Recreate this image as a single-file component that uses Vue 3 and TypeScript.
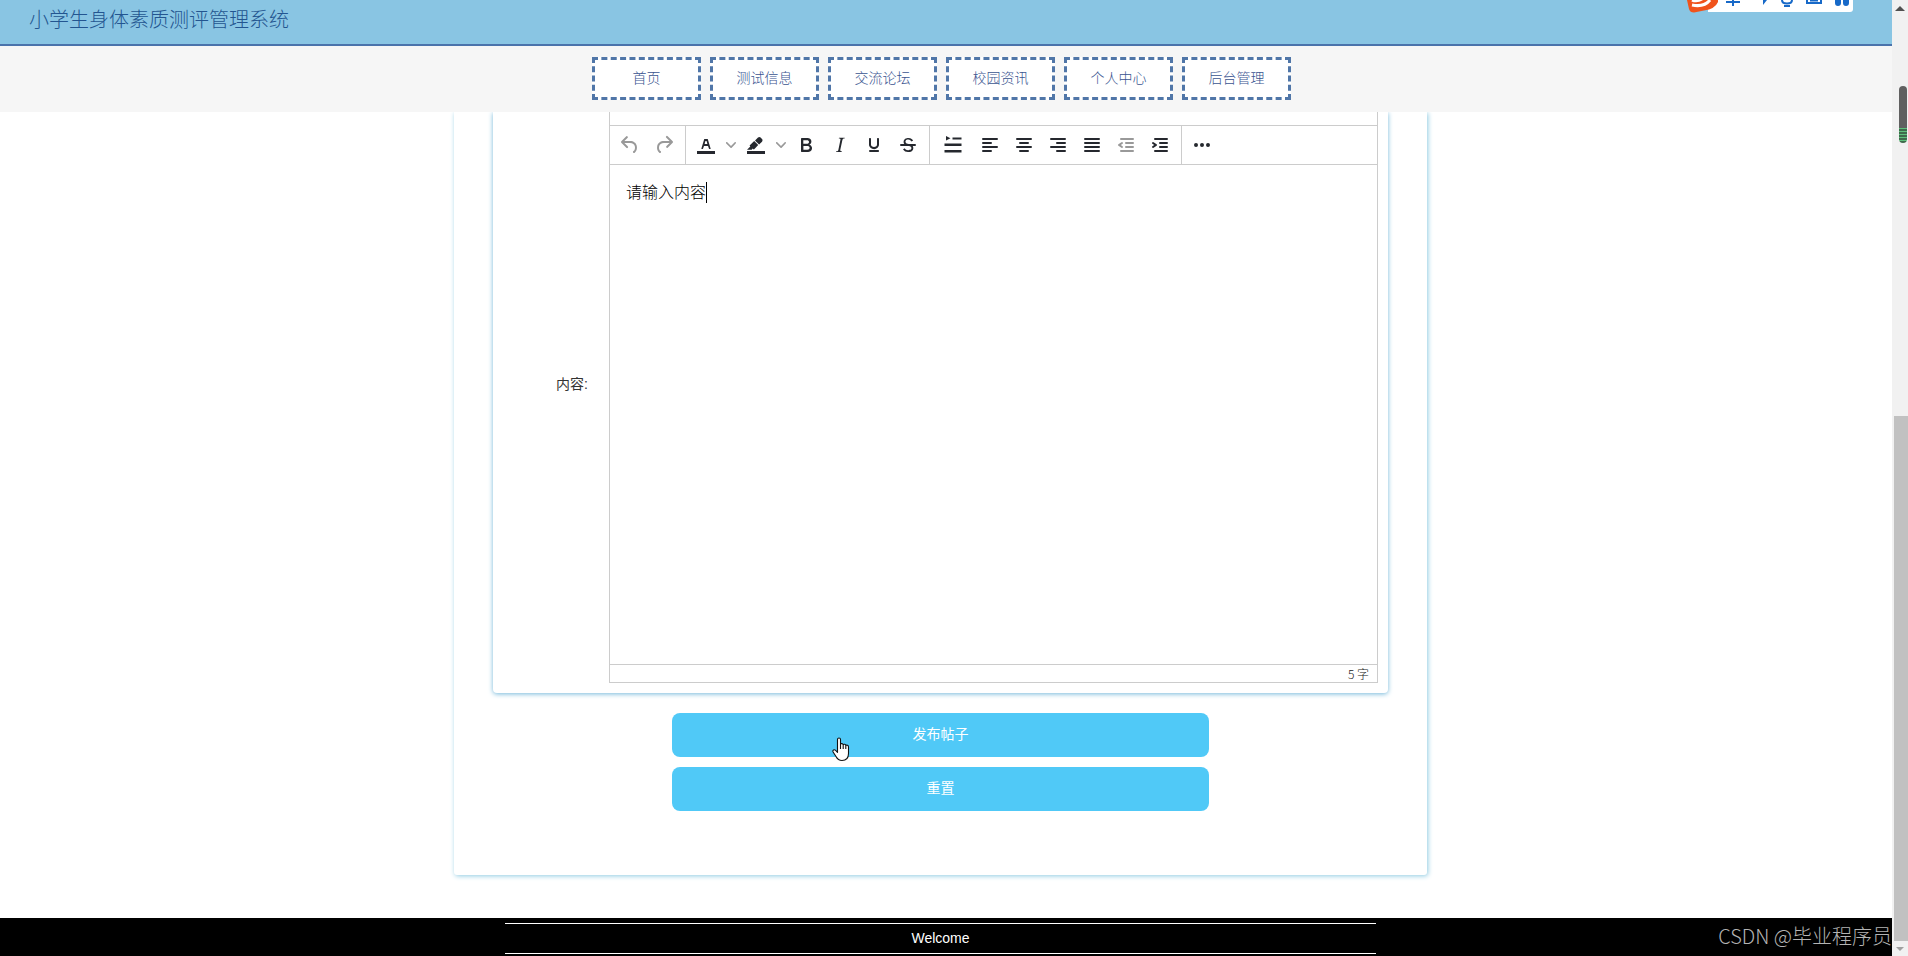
<script setup lang="ts">
import { ref } from 'vue'

interface Tool {
  name: string
  paths: string[]
  size?: string
  disabled?: boolean
  split?: boolean
}

const title = '小学生身体素质测评管理系统'
const menus: string[] = ['首页', '测试信息', '交流论坛', '校园资讯', '个人中心', '后台管理']
const defaultContent = '请输入内容'
const content = ref<string>(defaultContent)

function reset(): void {
  content.value = defaultContent
}

const bar = 'M3 18h18v3H3z'
const groups: Tool[][] = [
  [
    {
      name: '撤销',
      disabled: true,
      paths: ['M6.4 8H12c3.7 0 6.2 2 6.8 5.1.6 2.7-.4 5.6-2.3 6.8a1 1 0 01-1-1.8c1.1-.6 1.8-2.7 1.4-4.6-.5-2.1-2.1-3.5-4.9-3.5H6.4l3.3 3.3a1 1 0 11-1.4 1.4l-5-5a1 1 0 010-1.4l5-5a1 1 0 011.4 1.4L6.4 8z'],
    },
    {
      name: '重做',
      disabled: true,
      paths: ['M17.6 10H12c-2.8 0-4.4 1.4-4.9 3.5-.4 2 .3 4 1.4 4.6a1 1 0 11-1 1.8c-2-1.2-2.9-4.1-2.3-6.8.6-3 3-5.1 6.8-5.1h5.6l-3.3-3.3a1 1 0 111.4-1.4l5 5a1 1 0 010 1.4l-5 5a1 1 0 01-1.4-1.4l3.3-3.3z'],
    },
  ],
  [
    {
      name: '文字颜色',
      split: true,
      paths: [
        bar,
        'M8.7 16h-.8a.5.5 0 01-.5-.6l2.7-9c.1-.3.3-.4.5-.4h2.8c.2 0 .4.1.5.4l2.7 9a.5.5 0 01-.5.6h-.8a.5.5 0 01-.4-.4l-.7-2.2c0-.3-.3-.4-.5-.4h-3.4c-.2 0-.4.1-.5.4l-.7 2.2c0 .3-.2.4-.4.4zm2.6-7.6l-.6 2a.5.5 0 00.5.6h1.6a.5.5 0 00.5-.6l-.6-2c0-.3-.3-.4-.5-.4h-.4c-.2 0-.4.1-.5.4z',
      ],
    },
    {
      name: '背景颜色',
      split: true,
      paths: [
        bar,
        'M7.7 16.7H3l3.3-3.3-.7-.8L10.2 8l4 4.1-4 4.2c-.2.2-.6.2-.8 0l-.6-.7-1.1 1.1zm5-7.5L11 7.4l3-2.9a2 2 0 012.6 0L18 6c.7.7.7 2 0 2.7l-2.9 2.9-1.8-1.8-.5-.6z',
      ],
    },
    {
      name: '粗体',
      paths: ['M7.8 19c-.3 0-.5 0-.6-.2l-.2-.5V5.7c0-.2 0-.4.2-.5l.6-.2h5c1.5 0 2.7.3 3.5 1 .7.6 1.1 1.4 1.1 2.5a3 3 0 01-.6 1.9c-.4.6-1 1-1.6 1.2.4.1.9.3 1.3.6s.8.7 1 1.2c.4.4.5 1 .5 1.6 0 1.3-.4 2.3-1.3 3-.8.7-2.1 1-3.8 1H7.8zm5-8.3c.6 0 1.2-.1 1.6-.5.4-.3.6-.7.6-1.3 0-1.1-.8-1.7-2.3-1.7H9.3v3.5h3.4zm.5 6c.7 0 1.3-.1 1.7-.4.4-.4.6-.9.6-1.5s-.2-1-.7-1.4c-.4-.3-1-.4-2-.4H9.4v3.8h4z'],
    },
    {
      name: '斜体',
      paths: ['M16.7 4.7l-.1.9h-.3c-.6 0-1 0-1.4.3-.3.3-.4.6-.5 1.1l-2.1 9.8v.6c0 .5.4.8 1.4.8h.2l-.2.8H8l.2-.8h.2c1.1 0 1.8-.5 2-1.5l2-9.8.1-.5c0-.6-.4-.8-1.4-.8h-.3l.2-.9h5.8z'],
    },
    {
      name: '下划线',
      paths: ['M16 5c.6 0 1 .4 1 1v5.5a4 4 0 01-.4 1.8l-1 1.4a5.3 5.3 0 01-5.5 1 5 5 0 01-1.6-1c-.5-.4-.8-.9-1.1-1.4a4 4 0 01-.4-1.8V6c0-.6.4-1 1-1s1 .4 1 1v5.5c0 .3 0 .6.2 1l.6.7a3.3 3.3 0 002.2.8 3.4 3.4 0 002.2-.8c.3-.2.4-.5.6-.8l.2-.9V6c0-.6.4-1 1-1zM8 17h8c.6 0 1 .4 1 1s-.4 1-1 1H8a1 1 0 010-2z'],
    },
    {
      name: '删除线',
      paths: [
        'M15.6 8.5c-.5-.7-1-1.1-1.3-1.3-.6-.4-1.3-.6-2-.6-2.7 0-2.8 1.7-2.8 2.1 0 1.6 1.8 2 3.2 2.3 4.4.9 4.6 2.8 4.6 3.9 0 1.4-.7 4.1-5 4.1A6.2 6.2 0 017 16.4l1.5-1.1c.4.6 1.6 2 3.7 2 1.6 0 2.5-.4 3-1.2.4-.8.3-2-.8-2.6-.7-.4-1.6-.7-2.9-1-1-.2-3.9-.8-3.9-3.6C7.6 6 10.3 5 12.4 5c2.9 0 4.2 1.6 4.7 2.4l-1.5 1.1z',
        'M5 11h14a1 1 0 010 2H5a1 1 0 010-2z',
      ],
    },
  ],
  [
    {
      name: '首行缩进',
      size: 'wide',
      paths: ['M5 3l4.500 2.300L5 7.600zM11.500 4.500H20.500v2h-9zM3.500 10.500h17v2.500h-17zM3.500 17h17v2.500h-17z'],
    },
    {
      name: '左对齐',
      paths: ['M5 5h14a1 1 0 010 2H5a1 1 0 010-2zm0 4h8a1 1 0 010 2H5a1 1 0 010-2zm0 4h14a1 1 0 010 2H5a1 1 0 010-2zm0 4h8a1 1 0 010 2H5a1 1 0 010-2z'],
    },
    {
      name: '居中',
      paths: ['M5 5h14a1 1 0 010 2H5a1 1 0 010-2zm3 4h8a1 1 0 010 2H8a1 1 0 010-2zm-3 4h14a1 1 0 010 2H5a1 1 0 010-2zm3 4h8a1 1 0 010 2H8a1 1 0 010-2z'],
    },
    {
      name: '右对齐',
      paths: ['M5 5h14a1 1 0 010 2H5a1 1 0 010-2zm6 4h8a1 1 0 010 2h-8a1 1 0 010-2zm-6 4h14a1 1 0 010 2H5a1 1 0 010-2zm6 4h8a1 1 0 010 2h-8a1 1 0 010-2z'],
    },
    {
      name: '两端对齐',
      paths: ['M5 5h14a1 1 0 010 2H5a1 1 0 010-2zm0 4h14a1 1 0 010 2H5a1 1 0 010-2zm0 4h14a1 1 0 010 2H5a1 1 0 010-2zm0 4h14a1 1 0 010 2H5a1 1 0 010-2z'],
    },
    {
      name: '减少缩进',
      disabled: true,
      paths: ['M7 5h12a1 1 0 010 2H7a1 1 0 010-2zm5 4h7a1 1 0 010 2h-7a1 1 0 010-2zm0 4h7a1 1 0 010 2h-7a1 1 0 010-2zm-5 4h12a1 1 0 010 2H7a1 1 0 010-2zm1.600-3.800a1 1 0 01-1.200 1.600l-3-2a1 1 0 010-1.600l3-2a1 1 0 011.200 1.600L6.800 12l1.800 1.200z'],
    },
    {
      name: '增加缩进',
      paths: ['M7 5h12a1 1 0 010 2H7a1 1 0 010-2zm5 4h7a1 1 0 010 2h-7a1 1 0 010-2zm0 4h7a1 1 0 010 2h-7a1 1 0 010-2zm-5 4h12a1 1 0 010 2H7a1 1 0 010-2zm-2.600-3.800L6.200 12l-1.800-1.200a1 1 0 011.200-1.600l3 2a1 1 0 010 1.600l-3 2a1 1 0 01-1.200-1.600z'],
    },
  ],
  [
    {
      name: '更多',
      paths: ['M6 10a2 2 0 100 4 2 2 0 000-4zm6 0a2 2 0 100 4 2 2 0 000-4zm6 0a2 2 0 100 4 2 2 0 000-4z'],
    },
  ],
]
</script>

<template>
  <div class="window">
    <div class="page">
      <header class="header">
        <h1 class="title">{{ title }}</h1>
      </header>
      <nav class="nav">
        <a v-for="menu in menus" :key="menu" class="nav-item" href="#">{{ menu }}</a>
      </nav>

      <main class="main">
        <form class="card" @submit.prevent>
          <div class="panel">
            <label class="label" for="content">内容:</label>
            <div class="editor">
              <div class="menubar"></div>
              <div class="toolbar">
                <div v-for="(group, i) in groups" :key="i" class="group">
                  <template v-for="tool in group" :key="tool.name">
                    <button type="button" class="tool" :class="tool.size" :disabled="tool.disabled" :aria-label="tool.name">
                      <svg width="24" height="24" viewBox="0 0 24 24">
                        <path v-for="d in tool.paths" :key="d" :d="d" fill-rule="evenodd" />
                      </svg>
                    </button>
                    <button v-if="tool.split" type="button" class="tool chevron" :aria-label="tool.name + '选项'">
                      <svg width="10" height="10" viewBox="0 0 10 10">
                        <path d="M8.7 2.2c.3-.3.8-.3 1 0 .4.4.4.9 0 1.2L5.7 7.8c-.3.3-.9.3-1.2 0L.2 3.4a.8.8 0 010-1.2c.3-.3.8-.3 1.1 0L5 6l3.700-3.800z" />
                      </svg>
                    </button>
                  </template>
                </div>
              </div>
              <div class="body">
                <textarea id="content" v-model="content" class="text" spellcheck="false"></textarea>
                <span class="caret"></span>
              </div>
              <div class="status">{{ content.length }} 字</div>
            </div>
          </div>
          <div class="actions">
            <button type="submit" class="action">
              发布帖子
              <svg class="pointer" width="18" height="26" viewBox="0 0 18 26">
                <path d="M5.500 14V2.600c0-2.100 3-2.100 3 0V7c.5-.7 2.300-.5 2.700.6.800-.7 2.300-.3 2.600.8 1-.6 2.700 0 2.700 1.500v6.600c0 4-2.300 7-6.500 7-3.300 0-4.700-1.500-6-4L1.100 15c-.9-1.800 1.200-3 2.500-1.600L5.500 15.300zM8.500 7v5M11.200 7.600V12M13.800 8.400V12" fill="#fff" stroke="#111" stroke-width="1.100" stroke-linejoin="round" />
              </svg>
            </button>
            <button type="button" class="action" @click="reset">重置</button>
          </div>
        </form>
      </main>

      <footer class="footer">
        <div class="welcome">Welcome</div>
        <span class="watermark">CSDN @毕业程序员</span>
      </footer>

      <div class="ime">
        <svg width="170" height="14" viewBox="0 0 170 14">
          <path d="M22 0H167V9a3 3 0 01-3 3H22z" fill="#fff" />
          <path d="M1 0H32V2Q29 9 18 10.500L8 12.500Q4 12.500 3 9z" fill="#f0531c" />
          <path d="M6 5Q18 7.500 24 0M6 0Q11 2 16 -1" fill="none" stroke="#fff" stroke-width="3" />
          <g fill="none" stroke="#1769c8" stroke-width="2">
            <path d="M40 2H54M47 0V6" />
            <path d="M96 0Q96 3.500 101 3.500Q106 3.500 106 0M98 6H104" />
            <path d="M121 0V3H135V0M124 .5H132" />
          </g>
          <path d="M77 0H81L77 5zM149 0h6v3a3 3 0 01-6 0zM157 0h6v3a3 3 0 01-6 0z" fill="#1769c8" />
        </svg>
      </div>
    </div>

    <div class="scrollbar">
      <svg class="arrow" width="10" height="5" viewBox="0 0 10 5"><path d="M0 5L5 0l5 5z" fill="#505050" /></svg>
      <div class="thumb"></div>
      <svg class="arrow" width="8" height="4" viewBox="0 0 8 4"><path d="M0 0h8L4 4z" fill="#a0a0a0" /></svg>
      <div class="gauge"></div>
    </div>
  </div>
</template>

<style>
body {
  margin: 0;
}
</style>

<style scoped>
.window {
  display: flex;
  min-height: 100vh;
  background: #fff;
  color: #333;
  font: 300 14px/20px "Liberation Sans", "Noto Sans CJK SC", sans-serif;
}
.window * {
  box-sizing: border-box;
}
.page {
  position: relative;
  display: flex;
  flex: 1;
  flex-direction: column;
  min-width: 0;
}
.header {
  height: 46px;
  padding: 5px 29px 0;
  border-bottom: 2px solid #4a73ab;
  background: #89c5e3;
}
.title {
  margin: 0;
  color: #235590;
  font-size: 20px;
  font-weight: 300;
  line-height: 30px;
}
.nav {
  display: flex;
  justify-content: center;
  gap: 9px;
  height: 66px;
  padding: 11px 9px 12px 0;
  background: #f6f6f6;
}
.nav-item {
  width: 109px;
  border: 3px dashed #5076a8;
  background: #fff;
  color: #3a5490;
  line-height: 36px;
  text-align: center;
  text-decoration: none;
}
.main {
  display: flex;
  flex: 1;
  justify-content: center;
  padding: 0 11px 43px 0;
  overflow: hidden;
}
.card {
  width: 100%;
  max-width: 973px;
  padding: 0 39px 64px;
  border-radius: 0 0 3px 3px;
  box-shadow: 1px 1px 5px #8fcbe2;
}
.panel {
  display: flex;
  align-items: center;
  padding: 0 10px 10px;
  border-radius: 0 0 4px 4px;
  box-shadow: 0 1px 5px #74b8da;
}
.label {
  width: 106px;
  padding: 0 21px 28px 0;
  font-weight: 400;
  text-align: right;
}
.editor {
  flex: 1;
  border: solid #ccc;
  border-width: 0 1px 1px;
}
.menubar {
  height: 14px;
  border-bottom: 1px solid #ccc;
}
.toolbar {
  display: flex;
  height: 39px;
  border-bottom: 1px solid #ccc;
}
.group {
  display: flex;
  padding: 0 4px 0 3px;
  border-right: 1px solid #ccc;
}
.group:last-child {
  border-right: 0;
}
.tool {
  display: flex;
  align-items: center;
  justify-content: center;
  width: 34px;
  padding: 0;
  border: 0;
  background: none;
  fill: #25282e;
}
.tool.wide {
  width: 40px;
}
.tool.chevron {
  width: 16px;
  fill: #999;
}
.tool:disabled {
  fill: #999;
}
.body {
  position: relative;
  height: 499px;
}
.text {
  display: block;
  width: 100%;
  height: 100%;
  padding: 16px;
  border: 0;
  outline: 0;
  background: none;
  color: #000;
  font: inherit;
  font-size: 16px;
  line-height: 24px;
  resize: none;
}
.caret {
  position: absolute;
  top: 17px;
  left: 96px;
  width: 1px;
  height: 21px;
  background: #000;
}
.status {
  height: 18px;
  padding-right: 8px;
  border-top: 1px solid #ccc;
  color: #222;
  font-family: "Noto Sans CJK SC", sans-serif;
  font-size: 12px;
  line-height: 18px;
  text-align: right;
}
.actions {
  display: flex;
  flex-direction: column;
  align-items: center;
  gap: 10px;
  padding-top: 20px;
}
.action {
  position: relative;
  width: 60%;
  height: 44px;
  padding: 0 0 2px;
  border: 0;
  border-radius: 8px;
  background: #50c9f7;
  color: #fff;
  font: inherit;
  font-weight: 400;
}
.pointer {
  position: absolute;
  top: 24px;
  left: 160px;
}
.footer {
  position: relative;
  padding: 5px 11px 2px 0;
  background: #000;
  color: #fff;
  font-weight: 400;
}
.welcome {
  max-width: 871px;
  margin: 0 auto;
  border: solid #fff;
  border-width: 1px 0;
  line-height: 29px;
  text-align: center;
}
.watermark {
  position: absolute;
  top: 3px;
  right: 0;
  color: #b4b4b4;
  font: 300 20px/30px "Noto Sans CJK SC", sans-serif;
}
.ime {
  position: absolute;
  top: 0;
  right: 36px;
  height: 14px;
}
.ime svg {
  display: block;
}
.scrollbar {
  position: relative;
  display: flex;
  flex-direction: column;
  align-items: center;
  width: 16px;
  padding: 6px 0 5px;
  background: #f1f1f1;
}
.thumb {
  align-self: flex-end;
  width: 14px;
  height: 525px;
  margin: auto 0 6px;
  background: #c1c1c1;
}
.gauge {
  position: absolute;
  top: 86px;
  right: 1px;
  width: 8px;
  height: 57px;
  border-radius: 4px;
  background: linear-gradient(#606060 42px, transparent 42px), repeating-linear-gradient(#5fc07c 0 1px, #3f6b4c 1px 3px);
}
</style>
